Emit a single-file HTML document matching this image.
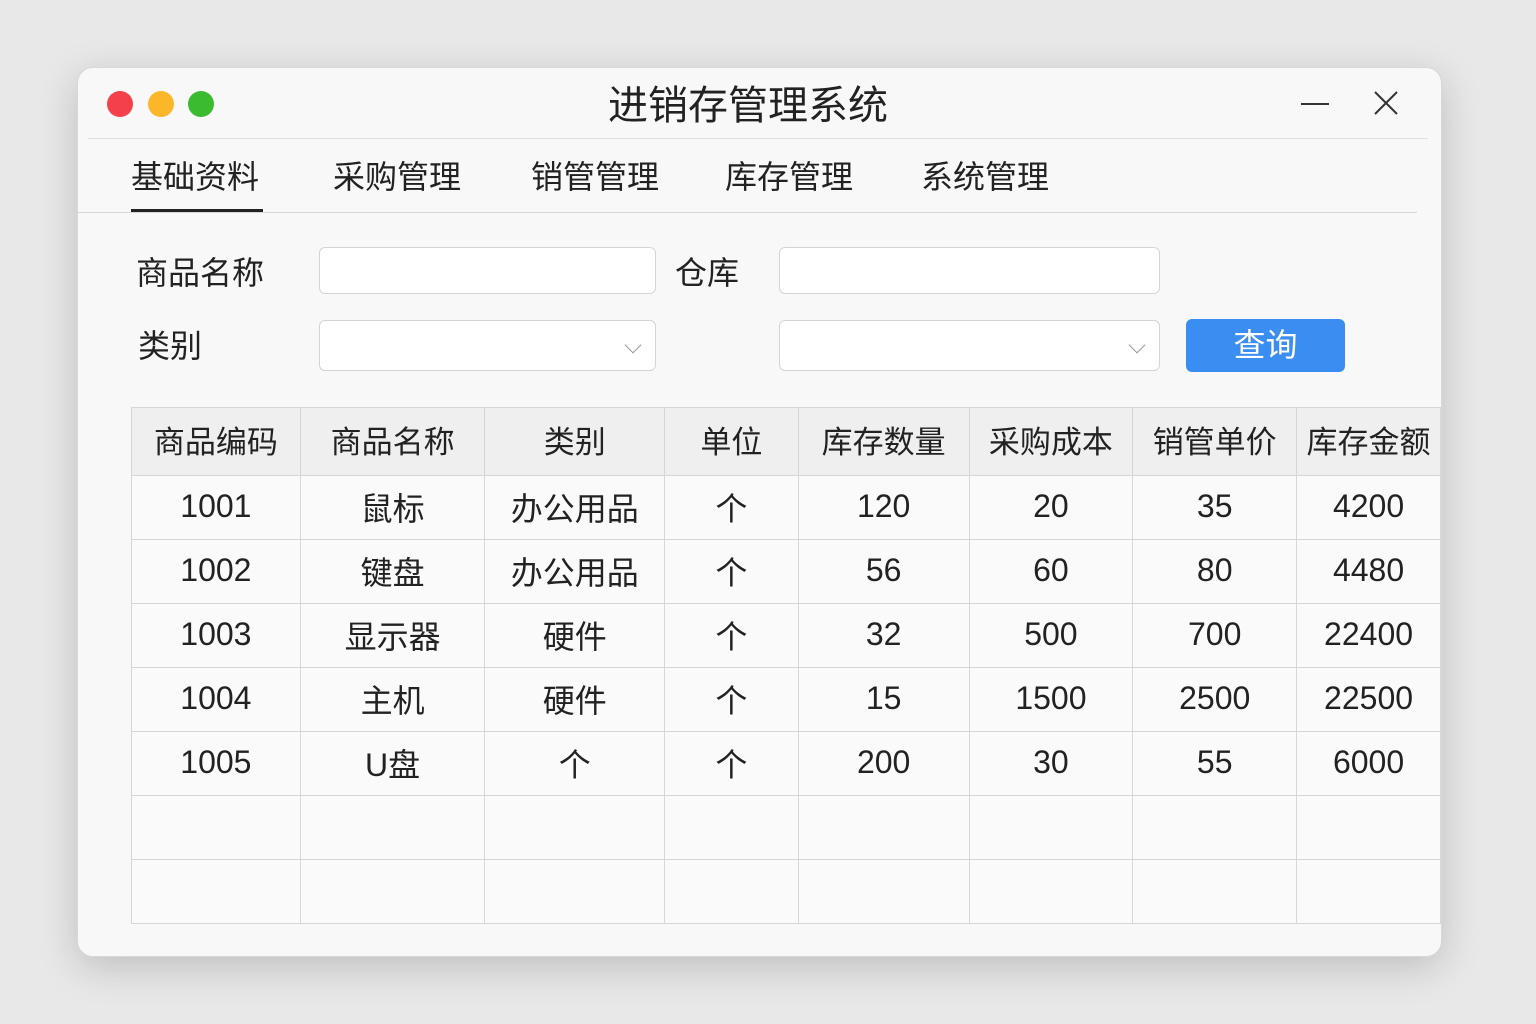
<!DOCTYPE html>
<html><head><meta charset="utf-8"><style>
*{margin:0;padding:0;box-sizing:border-box}
body{width:1536px;height:1024px;background:#e8e8e8;font-family:"Liberation Sans","Noto Sans CJK SC",sans-serif;color:#222;position:relative;overflow:hidden}
.win{position:absolute;left:77px;top:67px;width:1365px;height:890px;background:#f8f8f8;border-radius:16px;box-shadow:0 10px 40px rgba(0,0,0,.18);border:1px solid #d8d8d8;overflow:hidden}
.abs{position:absolute}
.dot{position:absolute;top:23px;width:26px;height:26px;border-radius:50%}
.title{position:absolute;left:0;width:1340px;text-align:center;top:5px;font-size:40px;color:#222}
.tab{position:absolute;top:84px;font-size:32px;color:#222}
.lbl{position:absolute;font-size:32px;color:#222}
.inp{position:absolute;background:#fff;border:1px solid #d4d4d4;border-radius:6px}
.chev{position:absolute;right:16px;top:18px;width:12px;height:12px;border-right:1.5px solid #999;border-bottom:1.5px solid #999;transform:rotate(45deg)}
table{position:absolute;left:53px;top:339px;border-collapse:collapse;font-size:32px}
td,th{border:1px solid #d6d6d6;text-align:center;font-weight:normal;padding:0}
th{background:#efefef;height:68px;font-size:31px;padding-bottom:4px}
td{background:#fafafa;height:64px;padding-bottom:2px}
</style></head><body>
<div class="win">
 <div class="dot" style="left:29px;background:#f4404a"></div>
 <div class="dot" style="left:70px;background:#fbb629"></div>
 <div class="dot" style="left:110px;background:#3bbb2f"></div>
 <div class="title">进销存管理系统</div>
 <div class="abs" style="left:1223px;top:35px;width:28px;height:2px;background:#333"></div>
 <svg class="abs" style="left:1295px;top:22px" width="26" height="26"><path d="M2 2L24 24M24 2L2 24" stroke="#333" stroke-width="2"/></svg>
 <div class="abs" style="left:10px;top:70px;width:1340px;height:1px;background:#e0e0e0"></div>
 <div class="tab" style="left:53px">基础资料</div>
 <div class="tab" style="left:255px">采购管理</div>
 <div class="tab" style="left:453px">销管管理</div>
 <div class="tab" style="left:647px">库存管理</div>
 <div class="tab" style="left:843px">系统管理</div>
 <div class="abs" style="left:53px;top:141px;width:132px;height:3px;background:#222"></div>
 <div class="abs" style="left:0;top:144px;width:1339px;height:1px;background:#d8d8d8"></div>
 <div class="lbl" style="left:58px;top:180px">商品名称</div>
 <div class="lbl" style="left:597px;top:180px">仓库</div>
 <div class="lbl" style="left:60px;top:253px">类别</div>
 <div class="inp" style="left:241px;top:179px;width:337px;height:47px"></div>
 <div class="inp" style="left:701px;top:179px;width:381px;height:47px"></div>
 <div class="inp" style="left:241px;top:252px;width:337px;height:51px"><div class="chev"></div></div>
 <div class="inp" style="left:701px;top:252px;width:381px;height:51px"><div class="chev"></div></div>
 <div class="abs" style="left:1108px;top:251px;width:159px;height:53px;background:#3a8ef2;border-radius:6px;color:#fff;font-size:32px;text-align:center;line-height:53px">查询</div>
 <table>
 <tr><th style="width:169px">商品编码</th><th style="width:185px">商品名称</th><th style="width:180px">类别</th><th style="width:134px">单位</th><th style="width:171px">库存数量</th><th style="width:164px">采购成本</th><th style="width:164px">销管单价</th><th style="width:144px">库存金额</th></tr>
 <tr><td>1001</td><td>鼠标</td><td>办公用品</td><td>个</td><td>120</td><td>20</td><td>35</td><td>4200</td></tr>
 <tr><td>1002</td><td>键盘</td><td>办公用品</td><td>个</td><td>56</td><td>60</td><td>80</td><td>4480</td></tr>
 <tr><td>1003</td><td>显示器</td><td>硬件</td><td>个</td><td>32</td><td>500</td><td>700</td><td>22400</td></tr>
 <tr><td>1004</td><td>主机</td><td>硬件</td><td>个</td><td>15</td><td>1500</td><td>2500</td><td>22500</td></tr>
 <tr><td>1005</td><td>U盘</td><td>个</td><td>个</td><td>200</td><td>30</td><td>55</td><td>6000</td></tr>
 <tr><td></td><td></td><td></td><td></td><td></td><td></td><td></td><td></td></tr>
 <tr><td style="height:63px"></td><td></td><td></td><td></td><td></td><td></td><td></td><td></td></tr>
 </table>
</div>
</body></html>
